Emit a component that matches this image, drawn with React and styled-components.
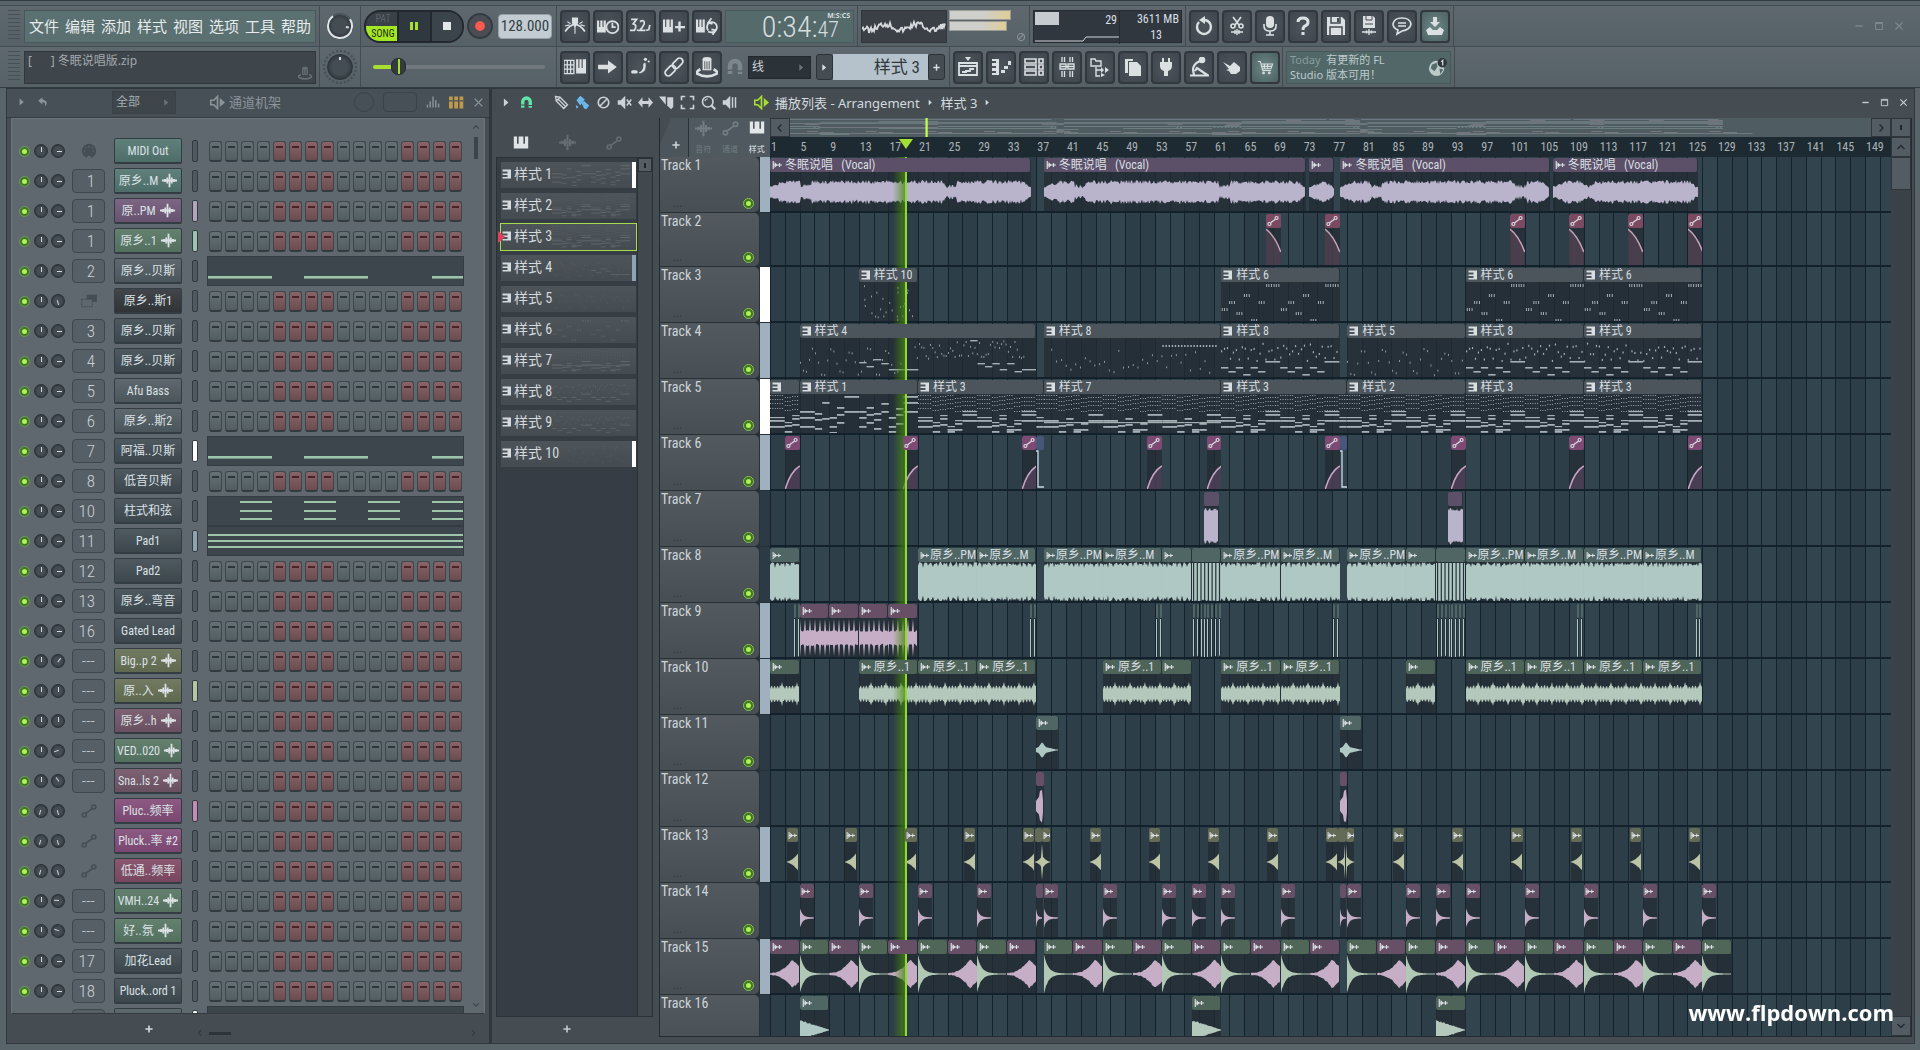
import React from "react";
import styled, { createGlobalStyle, css } from "styled-components";

const NARROW = '"Roboto Condensed", "Liberation Sans Narrow", "Roboto", "Noto Sans CJK SC", sans-serif';
const SANS = '"Noto Sans", "Noto Sans CJK SC", sans-serif';
const BARS = 151.5;

const GlobalStyle = createGlobalStyle`
  * { box-sizing: border-box; }
  body { margin: 0; background: #59636a; overflow: hidden; }
  button, input, select { font: inherit; color: inherit; margin: 0; padding: 0; border: 0; background: none; }
  svg { display: block; }
  h1, h2, ul { margin: 0; padding: 0; font-weight: 400; list-style: none; }
`;

/* ---------- icons ---------- */
const line = { fill: "none", stroke: "currentColor", strokeWidth: 1.6 };
const ICONS = {
  metronome: <g {...line}><path d="M1 15Q10 2 19 15" /><path d="M10 3v14M3 6l3 2M17 6l-3 2M1 10l4-1M19 10l-4-1" strokeWidth="1" /><path d="M8 3h4v4l-2 3-2-3z" fill="currentColor" /></g>,
  wait: <g><path d="M0 5h2v6h1V5h2v6h1V5h2v11H0z" fill="currentColor" /><circle cx="14" cy="11" r="5.5" {...line} /><path d="M14 7v4h3" {...line} /></g>,
  count: <g {...line}><path d="M1 4h5l-3 4q4 1 1 6H0M9 6q4-2 4 1 0 2-4 7h5M18 9l-1 5M7 13v1.500M15.500 13v1.500" /></g>,
  overdub: <g><path d="M0 4h2v7h1V4h3v7h1V4h2v12H0z" fill="currentColor" /><path d="M15 6v9M11 11h9" {...line} strokeWidth="2.2" /></g>,
  loop: <g><path d="M0 4h2v7h1V4h2v7h1V4h2v12H0z" fill="currentColor" /><path d="M18 8a5 5 0 0 0-7 0q-2 3 0 6M11 15q4 2 7-1 2-3 0-6M14 3l-3 4 4 1M15 18l3-4-4-1" {...line} /></g>,
  typing: <g><path d="M0 4h9v12H0zM0 8h9M0 12h9M3 4v12M6 4v12" {...line} strokeWidth="1.200" /><path d="M11 3h2v8h1V3h2v8h1V3h3v13h-9z" fill="currentColor" /></g>,
  arrow: <path d="M1 8h9V4l8 6-8 6v-4H1z" fill="currentColor" />,
  slide: <g fill="currentColor"><rect x="1" y="13" width="6" height="3" rx="1.500" /><path d="M8 15q5-2 4-8l2-1q2 8-5 10z" /><circle cx="14" cy="3" r="1.500" /><circle cx="17" cy="5" r="1" /></g>,
  link: <g {...line}><rect x="8" y="4" width="11" height="6" rx="3" transform="rotate(-45 13 7)" /><rect x="1" y="10" width="11" height="6" rx="3" transform="rotate(-45 7 13)" /></g>,
  knob: <g><path d="M6 3h8v10H6z" fill="currentColor" /><path d="M8 4v8M10 4v8M12 4v8" stroke="#444b52" strokeWidth=".800" /><ellipse cx="10" cy="3" rx="4" ry="2" fill="currentColor" /><path d="M4 12q-4 2-3 4 9 5 18 0 1-2-3-4" {...line} strokeWidth="2.400" /></g>,
  magnet: <path d="M5 17V9a5 5 0 0 1 10 0v8" fill="none" stroke="currentColor" strokeWidth="4.500" strokeDasharray="3 1.500 23 1.500 3" />,
  playlist: <g><path d="M7 0h6l-3 4z" fill="currentColor" /><path d="M1 6h18v12H1zM1 9h18M4 15h4v-1h4v-2h4" {...line} strokeWidth="1.800" /></g>,
  piano: <g fill="currentColor"><path d="M1 2h7v16H1v-2h4v-2H1v-3h4V9H1V6h4V4H1z" /><path d="M10 13h4v3h-4zM13 9h4v3h-4zM17 4h3v4h-3z" /></g>,
  rack: <g {...line}><path d="M1 2h11v4H1zM1 8h11v4H1zM1 14h11v4H1zM15 2h4v4h-4zM15 8h4v4h-4zM15 14h4v4h-4z" /></g>,
  mixer: <g {...line} strokeWidth="1.300"><path d="M5 0v5M7.500 0v5M5 14v6M7.500 14v6M13 0v5M15.500 0v5M13 14v6M15.500 14v6" /><path d="M3 7h6v5H3zM11 7h6v5h-6zM3 9.500h14" /></g>,
  browser: <g><path d="M1 2h4l1 2h5v5H1zM6 10v9h4M6 13h5" {...line} strokeWidth="1.400" /><path d="M11 10v6l3-3zM15 10v6l4-3zM11 16v4l4-2z" fill="currentColor" /></g>,
  files: <g fill="currentColor"><path d="M2 2h8v2H5v12H2z" /><path d="M6 5h8l4 4v10H6z" /></g>,
  plug: <path d="M6 1h2v4h4V1h2v4h2v4q0 4-4 5v5H8v-5q-4-1-4-5V5h2z" fill="currentColor" />,
  stomp: <g {...line}><circle cx="13" cy="3" r="2.500" fill="currentColor" /><path d="M11 4Q4 7 4 13l1 5M1 18.500h18L8 11l-2 3" strokeWidth="2.200" /></g>,
  hand: <path d="M1 5l7 4 4-4 6 5v4l-4 3H9l-2-3-3-1 3-1z" fill="currentColor" />,
  cart: <g {...line} strokeWidth="1.300" transform="translate(2 2) scale(.82)"><path d="M1 3h3l3 11h10M5 6h14l-2 6H6M9 6v6M13 6v6M5 9h13" /><circle cx="8" cy="17" r="1" /><circle cx="15" cy="17" r="1" /></g>,
  undo: <g><path d="M5 6a7 7 0 1 0 6-2" {...line} strokeWidth="2.400" /><path d="M11 0v8L5 4z" fill="currentColor" /></g>,
  cut: <g {...line}><path d="M6 1l6 8M14 1L8 9" /><circle cx="6" cy="10" r="2" /><circle cx="14" cy="10" r="2" /><path d="M4 16h12M8 14v4M10 13v6M12 14v4" strokeWidth="1.400" /></g>,
  mic: <g><rect x="6" y="0" width="8" height="12" rx="4" fill="currentColor" /><path d="M4 8v2q0 5 6 5t6-5V8M10 15v4M6 19h8" {...line} /></g>,
  help: <g><path d="M5 6q0-4 5-4t5 4q0 3-3 4-2 1-2 4" {...line} strokeWidth="3" /><rect x="8.500" y="16" width="3" height="3" fill="currentColor" /></g>,
  save: <g><path d="M1 1h15l3 3v15H1z" fill="currentColor" /><path d="M5 1v6h9V1M4 19v-8h12v8" fill="none" stroke="#444b52" strokeWidth="1.500" /><path d="M11 2h2v4h-2z" fill="#444b52" /></g>,
  render: <g><path d="M4 0h10l2 2v10H4z" fill="currentColor" /><path d="M7 0v4h6V0M6 8h8" stroke="#444b52" fill="none" /><path d="M3 16h14M7.500 14.500v3M10 13v6M12.500 14.500v3" {...line} strokeWidth="1.400" /></g>,
  chat: <g {...line}><path d="M5 18l1-4q-5-2-5-6 1-6 9-6t9 6q-1 6-9 7z" /><path d="M6 7h8M6 10h8" /></g>,
  download: <g fill="currentColor"><path d="M8 1h4v5h3l-5 5-5-5h3z" /><path d="M1 14l4-3 3 3h4l3-3 4 3-2 5H3z" /></g>,
  keys: <path d="M1 2h4v9h2V2h6v9h2V2h4v15H1z" fill="currentColor" />,
  wave: <path d="M0 10h20M4 8v4M7 6v8M10 1v18M13 6v8M16 8v4" stroke="currentColor" strokeWidth="2.400" />,
  auto: <g {...line} strokeWidth="2"><circle cx="4" cy="15" r="2.500" /><circle cx="16" cy="5" r="2.500" /><path d="M6 13L14 7" /></g>,
  pencil: <g {...line} strokeWidth="1.800"><path d="M2 2l6 1 10 10-5 5L3 8zM5 5l10 10M8 3l-5 5" /></g>,
  brush: <g fill="currentColor"><path d="M2 7l5-6 6 5-6 8z" /><path d="M9 11l3-3 7 6-4 5-3-1z" /><path d="M1 13l4 3-3 2z" /></g>,
  slash: <g {...line} strokeWidth="2.200"><circle cx="10" cy="10" r="7" /><path d="M5 15L15 5" /></g>,
  mute: <g><path d="M1 7h4l6-6v18l-6-6H1z" fill="currentColor" /><path d="M13 6l6 8M19 6l-6 8" {...line} strokeWidth="2" /></g>,
  slip: <path d="M0 10l6-7v5h8V3l6 7-6 7v-5H6v5z" fill="currentColor" />,
  slice: <g fill="currentColor"><path d="M0 2h9v11z" /><path d="M11 3h8v13l-3 3-5-5z" /></g>,
  select: <path d="M2 7V2h5M13 2h5v5M18 13v5h-5M7 18H2v-5" {...line} strokeWidth="2.200" />,
  zoom: <g><circle cx="9" cy="9" r="7" {...line} strokeWidth="2.200" /><path d="M14 14l5 5" {...line} strokeWidth="3" /><path d="M5 8q1-3 4-3" {...line} /></g>,
  speaker: <g><path d="M1 7h4l6-6v18l-6-6H1z" fill="currentColor" /><path d="M14 3v14M18 3v14" {...line} strokeWidth="2" /></g>,
  play: <g><path d="M1 7h4l5-5v16l-5-5H1z" {...line} strokeWidth="2.200" /><path d="M13 4l7 6-7 6z" fill="currentColor" /></g>,
  tri: <path d="M6 4l7 6-7 6z" fill="currentColor" />,
  back: <path d="M9 2L2 8l7 6v-4q6 0 4 8 8-9-4-12z" fill="currentColor" />,
  bars: <path d="M2 14v4M6 9v9M10 2v16M14 7v11M18 12v6" stroke="currentColor" strokeWidth="2" />,
  racks: <g fill="currentColor"><path d="M0 2h5v16H0zM7 2h5v16H7zM14 2h5v16h-5z" /><path d="M0 7h5v1.500H0zM7 7h5v1.500H7zM14 7h5v1.500h-5z" fill="#475057" /></g>,
  close: <path d="M3 3l14 14M17 3L3 17" {...line} strokeWidth="2.400" />,
  plus: <path d="M10 1v18M1 10h18" {...line} strokeWidth="4" />,
  up: <path d="M3 14l7-7 7 7" {...line} strokeWidth="2.600" />,
  down: <path d="M3 6l7 7 7-7" {...line} strokeWidth="2.600" />,
  left: <path d="M13 3l-7 7 7 7" {...line} strokeWidth="2.600" />,
  right: <path d="M7 3l7 7-7 7" {...line} strokeWidth="2.600" />,
  min: <path d="M3 10h14" {...line} strokeWidth="3" />,
  max: <path d="M3 3h14v14H3zM3 5h14" {...line} strokeWidth="2" />,
  pat: <path d="M1 1h17v18H1v-3h10v-4H1V9h10V5H1z" fill="currentColor" />,
  clip: <g><path d="M2.500 2v16M2 10h18M15 6v8" stroke="currentColor" strokeWidth="2.400" /><path d="M5 4v12l6-6z" fill="currentColor" /></g>,
  midi: <g><circle cx="10" cy="10" r="9" fill="currentColor" /><path d="M8 19v-3h4v3" fill="#5e686e" /><g fill="#5e686e"><circle cx="4.500" cy="10" r="1" /><circle cx="6" cy="6" r="1" /><circle cx="10" cy="4.500" r="1" /><circle cx="14" cy="6" r="1" /><circle cx="15.500" cy="10" r="1" /></g></g>,
  layer: <g><path d="M7 2h13v9H7z" fill="currentColor" /><path d="M1 8h13v9H1z" fill="#5e686e" stroke="currentColor" strokeWidth="1.500" strokeDasharray="2 1" /></g>,
  globe: <g><circle cx="9" cy="11" r="8" fill="currentColor" /><path d="M4 7l5-2 1 4-3 5-4-3zM12 11l4 1-3 5z" fill="#556b6b" /><circle cx="15" cy="5" r="5" fill="#30383e" /><path d="M14 4l1.500-1.500V8" stroke="#d8e0e0" strokeWidth="1.300" fill="none" /></g>,
};
const Icon = ({ name, size = 20 }) => (
  <svg width={size} height={size} viewBox="0 0 20 20" aria-hidden="true">{ICONS[name]}</svg>
);

/* ---------- toolbar ---------- */
const Shell = styled.div`
  height: 100vh; display: flex; flex-direction: column; overflow: hidden;
  background: #59636a; color: #d9dfe3; font: 12px/16px ${NARROW};
  border-top: 1px solid #343d43; padding-top: 4px;
`;
const Bar = styled.div`
  display: flex; height: 41px; flex: none; padding-left: 5px;
  border-top: 1px solid #424b51;
  background: linear-gradient(#5e686e, #566067);
`;
const Cell = styled.div`
  display: flex; align-items: center; height: 40px; gap: ${(p) => p.$gap ?? 3}px;
  width: ${(p) => (p.$w ? p.$w + "px" : "auto")}; padding: 0 3px; flex: none;
  border-right: 1px solid #434c52;
  justify-content: ${(p) => p.$justify || "flex-start"};
`;
const Grip = styled.div`
  width: 12px; height: 32px; margin-right: 1px;
  background: repeating-linear-gradient(#465057 0 1px, transparent 1px 4px);
`;
const MenuBar = styled.nav`
  flex: 1; height: 33px; display: flex; align-items: center; justify-content: space-between; padding: 0 4px;
  background: #5b7070; border: 1px solid #48575a;
`;
const MenuItem = styled.button`font: 15px/22px ${SANS}; color: #e6ecee; white-space: nowrap;`;
const Hint = styled.div`
  flex: 1; height: 33px; display: flex; justify-content: space-between; padding: 0 3px;
  background: #3e454b; border: 1px solid #30373d; font: 12px/18px ${SANS}; color: #a3a9ad;
`;
const HintIcon = styled.span`align-self: flex-end; color: #666f75; padding-bottom: 3px;`;
const Knob = styled.input.attrs({ type: "range" })`
  appearance: none; flex: none; width: ${(p) => p.$s}px; height: ${(p) => p.$s}px; border-radius: 50%;
  transform: rotate(${(p) => p.$a || 0}deg);
  background:
    linear-gradient(#d3d9dc, #d3d9dc) center 2px / ${(p) => (p.$s > 20 ? 2 : 1)}px ${(p) => (p.$s > 20 ? 3 : 5)}px no-repeat,
    radial-gradient(circle, #454d54 0 45%, #30373d 75%);
  border: ${(p) => (p.$ring ? "2px solid #dfe4e7" : "1px solid #2c3338")};
  ${(p) => p.$ring && css`border-left-color: #4a5359;`}
  outline: ${(p) => (p.$s > 20 && !p.$ring ? "2px dotted #454e54" : "none")};
  outline-offset: 2px;
  &::-webkit-slider-thumb { appearance: none; width: 0; height: 0; }
`;
const Transport = styled.div`
  display: flex; width: 100px; height: 33px; border-radius: 16px; overflow: hidden; flex: none;
  border: 2px solid #22282e; background: #3a4148;
`;
const Mode = styled.button`
  width: 31px; display: flex; flex-direction: column; font: 10px/14px ${NARROW}; color: #5a6268; text-align: center;
`;
const ModeOn = styled.span`background: #a4e824; color: #1f2b10; display: block; line-height: 16px; padding-left: 3px;`;
const ModeOff = styled.span`display: block; padding-left: 3px; line-height: 14px;`;
const TButton = styled.button`
  flex: 1; display: grid; place-items: center; border-left: 2px solid #22282e;
  background: ${(p) => (p.$down ? "#2f373f" : "#3b434b")};
`;
const Record = styled.button`
  width: 26px; height: 26px; border-radius: 50%; border: 2px solid #343b41; display: grid; place-items: center;
  background: radial-gradient(circle, #fa5a50 0 28%, #4a4d53 34%);
  flex: none;
`;
const Tempo = styled.input`
  width: 54px; height: 25px; border-radius: 4px; background: #c2ccd2; color: #333c42; text-align: center;
  font: 15px/24px ${NARROW}; border: 1px solid #95a1a8; flex: none; margin-left: 2px;
`;
const Slider = styled.input.attrs({ type: "range" })`
  appearance: none; width: 172px; height: 20px;
  &::-webkit-slider-runnable-track {
    height: 4px; border-radius: 2px; background: linear-gradient(90deg, #a8df2e 12%, #71797f 12%);
  }
  &::-webkit-slider-thumb {
    appearance: none; width: 15px; height: 17px; margin-top: -7px; border-radius: 7px;
    background: linear-gradient(90deg, transparent 6px, #a8df2e 6px 8px, transparent 8px), #333a40; border: 1px solid #232a2f;
  }
`;
const Tool = styled.button`
  width: 30px; height: 33px; flex: none; display: grid; place-items: center; border-radius: 4px;
  border: 2px solid #31383e; color: #dbe0e3;
  background: ${(p) => (p.$teal ? "radial-gradient(#6d8786, #4c6163)" : "radial-gradient(#4d555c, #3f464d)")};
`;
const Clock = styled.div`
  width: 130px; height: 33px; background: #556a6a; border: 1px solid #495a5c; position: relative;
  display: flex; align-items: baseline; justify-content: flex-end; padding-right: 14px; color: #d5dee0;
  font: 30px/32px ${NARROW}; font-weight: 300;
`;
const ClockSmall = styled.span`font-size: 22px;`;
const ClockUnit = styled.span`position: absolute; right: 3px; top: 1px; font: bold 7px/8px ${SANS}; color: #d5dee0;`;
const Scope = styled.div`width: 86px; height: 33px; background: #3a4046; border: 1px solid #30363c;`;
const Meters = styled.div`width: 77px; height: 33px; display: flex; flex-direction: column; gap: 1px;`;
const Meter = styled.div`
  height: 10px; width: ${(p) => p.$w}px; background: linear-gradient(90deg, #cfd0cc 55%, #e0cd96); border: 1px solid #9b9c95;
`;
const MeterEye = styled.span`align-self: flex-end; color: #899196;`;
const Cpu = styled.div`
  width: 150px; height: 33px; display: grid; grid-template-columns: 86px 1fr; background: #30373e; border: 1px solid #262c32;
  font: 12px/16px ${NARROW};
`;
const CpuLeft = styled.div`display: grid; grid-template-columns: 24px 1fr; padding: 1px; border-right: 1px solid #252b30;`;
const CpuBlock = styled.i`height: 13px; background: #c5cbcf;`;
const CpuText = styled.span`text-align: right; padding-right: ${(p) => p.$pr || 2}px; display: block;`;
const CpuGraph = styled.svg`grid-column: 1 / 3;`;
const Dropdown = styled.select`
  appearance: none; width: ${(p) => p.$w}px; height: 23px; padding: 0 3px; border: 1px solid ${(p) => p.$line || "#23292e"};
  background: ${(p) => p.$bg || "#2c3338"}; color: ${(p) => p.$c || "#cfd5d9"}; font: 12px/20px ${SANS};
`;
const DropWrap = styled.div`display: flex; align-items: center; color: #6d757b; margin-left: ${(p) => p.$ml || 0}px;`;
const DropArrow = styled.span`margin-left: -15px; pointer-events: none;`;
const PatternBox = styled.div`display: flex; margin-left: 6px;`;
const MiniButton = styled.button`
  width: 17px; height: 26px; border: 1px solid #2c3338; border-radius: 3px; background: #454d53; display: grid; place-items: center;
`;
const PatternName = styled.input`
  width: 95px; height: 26px; background: #b5c2cb; color: #30383e; text-align: right; padding-right: 8px; font: 17px/26px ${NARROW};
`;
const News = styled.div`
  width: 165px; height: 33px; display: flex; justify-content: space-between; align-items: center; padding: 0 3px; background: #516768;
  border: 1px solid #465759; font: 11px/15px ${SANS}; color: #bccaca;
`;
const Dim = styled.span`color: #879c9c;`;
const WindowButtons = styled.div`
  display: flex; gap: 10px; margin-left: auto; align-items: center; padding-right: ${(p) => p.$pr ?? 16}px; color: ${(p) => p.$c || "#7c868c"};
`;
const Plain = styled.button`display: grid; place-items: center; color: ${(p) => p.$c || "inherit"}; margin-left: ${(p) => p.$ml || 0}px;`;

/* ---------- channel rack ---------- */
const Main = styled.main`flex: 1; min-height: 0; display: flex; padding: 0 5px 6px 6px; border-top: 1px solid #343c42;`;
const Panel = styled.section`
  display: flex; flex-direction: column; background: #454d53; border: 1px solid #30383e; min-height: 0; min-width: 0;
`;
const Rack = styled(Panel)`width: 484px; flex: none;`;
const RackHead = styled.header`
  height: 29px; flex: none; display: flex; align-items: center; color: #8c9499; padding: 0 5px 2px 9px; gap: 9px;
  background: #475057; border-bottom: 1px solid #343c42;
`;
const RackTitle = styled.h2`display: flex; align-items: center; gap: 4px; font: 13px/18px ${SANS}; margin-left: 29px; flex: 1;`;
const Faint = styled.span`
  width: ${(p) => p.$w}px; height: 20px; border: 1px solid #3b4349; border-radius: ${(p) => p.$r}px;
`;
const RackBody = styled.div`
  flex: 1; min-height: 0; margin: 0 4px; display: flex; background: #5e686e; border: 1px solid #6b757b; border-bottom-color: #343c42; overflow: hidden;
`;
const Channels = styled.ul`flex: none; width: 457px; padding: 17px 0 0 7px;`;
const Channel = styled.li`
  height: 30px; display: grid; align-items: center;
  grid-template-columns: 15px 17px 21px 42px 78px 15px 257px;
`;
const Led = styled.input.attrs({ type: "checkbox", defaultChecked: true })`
  appearance: none; width: 9px; height: 9px; border-radius: 50%; border: 2px solid #3c7a20; flex: none;
  background: #b4f05a; outline: 1px solid ${(p) => (p.$track ? "#8ec44a" : "#6e9a58")}; margin-left: 1px;
`;
const Route = styled.button`
  width: 33px; height: 24px; border: 1px solid #3e474d; border-radius: 4px; color: #c9cfd3; text-align: right;
  font: 300 17px/22px ${NARROW}; padding-right: 9px; background: #565f66;
`;
const RouteIcon = styled.span`width: 33px; display: grid; place-items: center; color: #454e54;`;
const tones = {
  teal: ["#60807c", "#4d6d69"], purple: ["#7c6683", "#665270"], green: ["#64806f", "#53705f"], gray: ["#5e686f", "#4b555c"],
  black: ["#42464a", "#303437"], dark: ["#4e5960", "#3c464d"], olive: ["#727b62", "#5f694f"], rose: ["#7d6274", "#695061"],
  magenta: ["#8d5a84", "#784670"], red: ["#8a5670", "#79465f"],
};
const ChannelName = styled.button`
  width: 68px; height: 26px; display: flex; align-items: center; justify-content: center; gap: 4px; border-radius: 2px;
  border: 1px solid #333c42; border-bottom-width: 2px; color: #dbe1e4; white-space: nowrap; font: 12px/20px ${NARROW};
  background: linear-gradient(${(p) => tones[p.$t][0]}, ${(p) => tones[p.$t][1]});
`;
const Selector = styled.button`width: 6px; height: 22px; border: 1px solid #333b41; border-radius: 2px; background: ${(p) => p.$c || "#4f595f"};`;
const Steps = styled.div`display: flex; gap: 3px; padding-left: 2px;`;
const Step = styled.input.attrs({ type: "checkbox" })`
  appearance: none; width: 13px; height: 21px; border-radius: 3px; border: 1px solid #3e464b; border-bottom: 2px solid #343b40;
  background:
    linear-gradient(${(p) => (p.$red ? "#4a2328" : "#2d3539")}, ${(p) => (p.$red ? "#4a2328" : "#2d3539")}) center 4px / 7px 2px no-repeat,
    linear-gradient(${(p) => (p.$red ? "#8a6466, #6c4c4f" : "#667176, #515d61")});
`;
const Roll = styled.div`height: 30px; background: #3e464d; border: 1px solid #343b41;`;
const ScrollColumn = styled.div`flex: 1; display: flex; flex-direction: column; align-items: center; padding: 4px 1px 4px 0; color: #3b444a; justify-content: space-between;`;
const Thumb = styled.i`width: 4px; height: 22px; background: #3b444a; margin: 6px auto 0; display: block;`;
const RackFoot = styled.footer`height: 29px; flex: none; display: flex; align-items: center; color: #30383d;`;
const HScroll = styled.div`display: flex; align-items: center; gap: 5px; flex: 1; padding: 9px 12px 0 43px;`;
const HThumb = styled.i`width: 22px; height: 3px; background: #2c343a; margin-right: auto;`;

const CHANNELS = [
  ["midi", "MIDI Out", "teal"], ["1", "原乡..M", "teal", 1], ["1", "原..PM", "purple", 1, "#b4a4c0"], ["1", "原乡..1", "green", 1, "#9cc4ae"],
  ["2", "原乡..贝斯", "gray", 0, 0, "bass"], ["layer", "原乡..斯1", "black", 0, 0, 0, 165], ["3", "原乡..贝斯", "dark"], ["4", "原乡..贝斯", "dark"],
  ["5", "Afu Bass", "gray"], ["6", "原乡..斯2", "gray"], ["7", "阿福..贝斯", "dark", 0, "#ffffff", "bass"], ["8", "低音贝斯", "dark"],
  ["10", "柱式和弦", "dark", 0, 0, "chord"], ["11", "Pad1", "dark", 0, "#8fa3b3", "pad"], ["12", "Pad2", "dark"], ["13", "原乡..弯音", "dark"],
  ["16", "Gated Lead", "dark"], ["---", "Big..p 2", "olive", 1, 0, 0, 35], ["---", "原..入", "olive", 1, "#b4c6a4", 0, 0],
  ["---", "原乡..h", "rose", 1, 0, 0, 0], ["---", "VED..020", "green", 1, 0, 0, 250], ["---", "Sna..ls 2", "rose", 1, 0, 0, 325],
  ["auto", "Pluc..频率", "magenta", 0, "#c48ab8", 0, 165], ["auto", "Pluck..率 #2", "magenta", 0, 0, 0, 165], ["auto", "低通..频率", "red", 0, 0, 0, 165],
  ["---", "VMH..24", "green", 1, 0, 0, 275], ["---", "好..氛", "green", 1, 0, 0, 290], ["17", "加花Lead", "dark"], ["18", "Pluck..ord 1", "dark"],
  ["", "", "gray", 0, "#ffffff", "empty"],
];
const ROLLS = {
  bass: [[0, 19, 64], [96, 19, 64], [224, 19, 31]],
  chord: [32, 96, 160, 224].flatMap((x) => [[x, 4, 32], [x, 13, 32], [x, 21, 32]]),
  pad: [[0, 7, 255], [0, 13, 255], [0, 19, 255]],
  empty: [],
};

function ChannelRow({ data, index }) {
  const [route, name, tone, wave, sel, roll, angle = 90] = data;
  const icon = ICONS[route];
  return (
    <Channel>
      <Led aria-label={`Channel ${index + 1} on`} />
      <Knob $s={14} $a={route === "auto" ? 195 : 0} aria-label={`Channel ${index + 1} pan`} />
      <Knob $s={14} $a={angle} aria-label={`Channel ${index + 1} volume`} />
      {icon ? <RouteIcon><Icon name={route} size={16} /></RouteIcon> : <Route>{route}</Route>}
      <ChannelName $t={tone}>{name}{wave ? <Icon name="wave" size={15} /> : null}</ChannelName>
      <Selector $c={sel} aria-label={`Select channel ${index + 1}`} />
      {roll ? (
        <Roll>
          <svg width="100%" height="28" viewBox="0 0 255 28" preserveAspectRatio="none">
            {ROLLS[roll].map(([x, y, w], i) => <rect key={i} x={x} y={y} width={w} height={roll === "bass" ? 2.6 : 2} fill="#9cc4a8" />)}
          </svg>
        </Roll>
      ) : (
        <Steps>
          {Array.from({ length: 16 }, (_, i) => (
            <Step key={i} $red={Math.floor(i / 4) % 2 === 1} aria-label={`Channel ${index + 1} step ${i + 1}`} />
          ))}
        </Steps>
      )}
    </Channel>
  );
}

/* ---------- playlist data ---------- */
const rnd = (seed) => { let s = seed * 9301 + 49297; return () => { s = (s * 9301 + 49297) % 233280; return s / 233280; }; };
const TONE = {
  vocal: ["#5b5068", "#b9b3cb"], mint: ["#4f6664", "#b0c8c4"], rose: ["#674f66", "#c6aec6"], leaf: ["#506758", "#b0c8b4"],
  sage: ["#4f6459", "#b4c8bc"], olive: ["#636a55", "#bcc4a6"], pat: ["#4b555b", "#a4b0b5"], steel: ["#46577a", "#aeb8d8"],
  pink: ["#7b4a62", "#c8a4b8"], plum: ["#7d4a74", "#c8a4c4"],
};
const V = (b, e, label) => ({ b, e, label, tone: "vocal", kind: "vocal" });
const P = (b, e, n) => ({ b, e, n, label: n ? `样式 ${n}` : "", tone: "pat", kind: "midi" });
const A = (b, tone, kind) => ({ b, e: b + 2, tone, kind });
const W = (b, e, tone, kind, label) => ({ b, e, tone, kind, label });
const PM = "原乡..PM", M = "原乡..M", ONE = "原乡..1", VOC = "冬眠说唱\u00a0\u00a0 (Vocal)";
const thin = (a) => a.map((b) => W(b, b + 0.25, "mint", "block"));
const cluster = (s) => [0.2, 0.7, 1.2, 1.7, 2.1, 2.6, 3.1, 3.7].map((d) => s + d);
const swing = [];
[[0, 36, 0], [37, 77, 1], [78, 130, 1]].forEach(([s, e, g]) => {
  for (let b = s, i = g; b < e; b += 4, i++) swing.push(W(b, b + 4, i % 2 ? "leaf" : "rose", i % 2 ? "impact" : "grow", ""));
});
const BLUE = "#9fb1be";
const TRACKS = [
  [BLUE, [V(0, 35.3, VOC), V(37, 72.4, VOC), V(72.8, 76.2, ""), V(77.1, 105.4, VOC), V(105.8, 125.4, VOC)]],
  [null, [67, 75, 100, 108, 116, 124].map((b) => A(b, "pink", "fall"))],
  ["#ffffff", [P(12, 20, 10), P(61, 77, 6), P(94, 110, 6), P(110, 126, 6)]],
  [BLUE, [P(4, 36, 4), P(37, 61, 8), P(61, 77, 8), P(78, 94, 5), P(94, 110, 8), P(110, 126, 9)]],
  ["#ffffff", [P(0, 4, 0), P(4, 20, 1), P(20, 37, 3), P(37, 61, 7), P(61, 78, 3), P(78, 94, 2), P(94, 110, 3), P(110, 126, 3)]],
  [BLUE, [...[2, 18, 34, 51, 59, 75, 92, 108, 124].map((b) => A(b, "plum", "rise")), ...[36, 77].map((b) => W(b, b + 1, "steel", "bracket"))]],
  [null, [W(58.7, 60.7, "vocal", "tall"), W(91.6, 93.7, "vocal", "tall")]],
  [null, [W(0, 4, "mint", "full", ""), W(20, 28, "mint", "full", PM), W(28, 36, "mint", "full", M), W(37, 45, "mint", "full", PM), W(45, 53, "mint", "full", M),
    W(53, 57, "mint", "full", ""), W(57, 61, "mint", "sliced"), W(61, 69, "mint", "full", PM), W(69, 77, "mint", "full", M), W(78, 86, "mint", "full", PM),
    W(86, 90, "mint", "full", ""), W(90, 94, "mint", "sliced"), W(94, 102, "mint", "full", PM), W(102, 110, "mint", "full", M), W(110, 118, "mint", "full", PM), W(118, 126, "mint", "full", M)]],
  [BLUE, [...[4, 8, 12, 16].map((b) => W(b, b + 4, "rose", "kick", "")),
    ...thin([3.2, 3.8, 35.2, 35.7, 52.2, 52.7, ...cluster(57), 76.1, 76.6, ...cluster(90), 109.1, 109.6, 125.1, 125.6])]],
  [BLUE, [W(0, 4, "sage", "hat", ""), ...[12, 20, 28, 45].map((b) => W(b, b + 8, "sage", "hat", ONE)), W(53, 57, "sage", "hat", ""),
    W(61, 69, "sage", "hat", ONE), W(69, 77, "sage", "hat", ONE), W(86, 90, "sage", "hat", ""), ...[94, 102, 110, 118].map((b) => W(b, b + 8, "sage", "hat", ONE))]],
  [null, [W(36, 39, "mint", "bump", ""), W(77, 80, "mint", "bump", "")]],
  [null, [W(36, 37, "rose", "burst"), W(77, 78, "rose", "burst")]],
  [BLUE, [...[2.3, 10.2, 18.3, 26.2, 34.2, 43.2, 51.2, 59.2, 67.2, 75.2, 84.2, 92.2, 100.2, 108.2, 116.2, 124.2].map((b) => W(b, b + 1.5, "olive", "swell", "")),
    ...[35.8, 76.8].flatMap((b) => [W(b, b + 1, "olive", "starIn"), W(b + 1, b + 2.1, "olive", "starOut", "")])]],
  [null, [4, 12, 20, 28, 37, 45, 53, 57, 61, 69, 78, 86, 90, 94, 102, 110, 118, 126].map((b) => W(b, b + 1.9, "rose", "hit", ""))
    .concat([W(36, 36.9, "rose", "hit"), W(77, 77.9, "rose", "hit")])],
  [BLUE, swing],
  [null, [W(4, 8, "mint", "decay", ""), W(57, 61, "sage", "decay", ""), W(90, 94, "sage", "decay", "")]],
];

const ENV = {
  vocal: (t, x, r, w) => Math.min(1, 0.5 + x / 30, 0.4 + (w - x) / 14) * (8 + r() * 4 - (Math.sin(x / 23) > 0.97 ? 4 : 0)),
  full: (t, x, r) => (Math.round(x) % 5 === 0 ? 14 + r() * 3 : 17 + r() * 3),
  kick: (t, x, r) => (Math.round(x) % 5 === 0 ? 19 : 6 + r() * 2),
  hat: (t, x, r) => (Math.round(x) % 15 === 12 ? 12 : Math.round(x) % 3 === 0 ? 5 : 7 + r() * 2),
  block: () => 19, sliced: () => 19,
  tall: (t, x, r) => 15 + r() * 3,
  bump: (t) => 0.5 + 4 * Math.exp(-Math.pow((t - 0.27) * 9, 2)) + 3 * Math.max(0, 1 - Math.abs(t - 0.3) * 1.6),
  burst: (t, x, r) => (t < 0.5 ? 5 + t * 10 : t < 0.9 ? 18 - r() * 4 : 6),
  swell: (t) => 0.5 + 8 * Math.pow(t, 1.7),
  starIn: (t) => (t > 0.88 ? 18 : 0.5 + 6 * t * t),
  starOut: (t) => (t < 0.1 ? 18 : 0.5 + 6 * Math.pow(1 - t, 2)),
  hit: (t) => 0.6 + 9 * Math.exp(-t * 5.5),
  grow: (t, x, r) => 0.5 + (t < 0.75 ? 13.5 * Math.pow(t / 0.75, 2.3) : 13.5 - (t - 0.75) * 30) + r(),
  impact: (t) => 0.5 + 19 * Math.exp(-t * 7),
  decay: (t, x, r) => 0.6 + (8 + r() * 2) * Math.max(0, 1 - t * 1.05),
};
function Wave({ kind, w, color, seed }) {
  const r = rnd(seed);
  const top = [], bot = [];
  const f = ENV[kind];
  for (let x = 0; x <= w; x += 1) {
    const a = f(x / w, x, r, w);
    top.push(`${x.toFixed(0)} ${(20 - a).toFixed(1)}`);
    bot.unshift(`${x.toFixed(0)} ${(20 + a * (0.92 + r() * 0.12)).toFixed(1)}`);
  }
  return (
    <>
      <path d={`M${top.join("L")}L${bot.join("L")}Z`} fill={color} />
      {kind === "sliced" && Array.from({ length: 8 }, (_, i) => <rect key={i} x={1 + i * 3.7} y="0" width="1.2" height="40" fill="#25323a" />)}
    </>
  );
}
const CHORDS = [[0, 2, [17, 23, 32]], [2, 1, [19, 25, 34]], [3, 1, [8, 24]], [4, 1, [23, 32, 38]], [5, 1, [13, 20, 28]], [6, 2, [2, 17]], [8, 1, [17, 23, 32]],
  [9, 1, [13, 20, 28]], [10, 1, [19, 25, 34]], [11, 1, [9, 17]], [12, 1, [23, 32, 37]], [13, 1, [14, 20, 29]], [14, 2, [2, 8, 17]]];
function notes(n, len) {
  const out = [];
  const r = rnd(n * 7 + 3);
  const u = 7.4;
  const put = (b, l, y, h = 1.4) => { if (b < len) out.push([b * u, y, Math.min(l, len - b) * u, h]); };
  if (n === 1) CHORDS.forEach(([b, l, ys]) => ys.forEach((y) => put(b, l, y, 1.8)));
  else if ([0, 2, 3, 7].includes(n)) {
    for (let k = 0; k < len; k += 8) {
      [[0, 2, 26], [2, 1, 31], [3, 1, 24], [4, 1, 35], [5, 1, 29], [6, 2, 20]].forEach(([b, l, y]) => {
        put(k + b, l, y, 1.8); put(k + b, l, Math.min(y + 6, 37), 1.8); put(k + b, l, n === 7 ? 28 : y - 3, 1.2);
        for (let x = 0; x < l * u - 1; x += 2.4)
          [2, 6, 10, 15].forEach((d) => { if ((k + b) * u + x < len * u) out.push([(k + b) * u + x, d + ((b * 3) % 4) - 1, 0.9, 1]); });
      });
    }
  } else if (n === 6) {
    for (let k = 0; k < len; k += 8)
      [26, 19, 30, 12, 37, 19, 2, 2].forEach((y, i) => [0.1, 0.4, 0.75].forEach((d) => out.push([(k + i + d) * u, y, 1, 3])));
  } else if (n === 10) {
    for (let i = 0; i < 26; i++) out.push([r() * len * u * 0.95, 3 + r() * 34, 0.8, 2]);
  } else if (n === 5 || n === 4) {
    const L = n === 4 ? 14 : 16;
    for (let i = 0; i < 34; i++) out.push([(i / 34) * L * u, 20 + Math.sin(i * 1.05) * 12 + r() * 6, 0.8, 2]);
    if (n === 4) {
      [[8, 1, 24], [9, 1, 28], [10, 1, 21], [11, 1, 25], [12, 4, 31], [24, 1, 25], [25, 1, 28], [26, 1, 25], [27, 1, 31], [28, 1, 25], [29, 1, 33], [30, 2, 31], [23, 1, 2]].forEach((a) => put(...a));
      for (let i = 0; i < 50; i++) out.push([(15.5 + (i / 50) * 15) * u, 2 + r() * 18, 0.8, 2]);
    }
  } else if (len > 20) {
    for (let i = 0; i < 34; i++) out.push([(1 + (i / 34) * 22) * u, 10 + r() * 26, 0.8, 2]);
    for (let i = 0; i < 18; i++) out.push([(16 + i * 0.42) * u, 7, 1.4, 2]);
  } else {
    for (let k = 0; k < len; k += 8) {
      [[0, 1, 29], [1, 1, 33], [2, 1, 29], [3, 1, 36], [4, 1, 29], [5, 1, 33], [6, 2, 23]].forEach(([b, l, y]) => put(k + b, l, y, 1.6));
      for (let i = 0; i < 20; i++) out.push([(k + (i / 20) * 8) * u, i % 3 ? 4 + r() * 12 : 12 + r() * 12, 1.2, 2]);
    }
  }
  return out;
}
function ClipArt({ clip, seed }) {
  const w = (clip.e - clip.b) * 7.4;
  const color = TONE[clip.tone][1];
  let art;
  if (clip.kind === "midi")
    art = notes(clip.n, clip.e - clip.b).map(([x, y, ww, h], i) => <rect key={i} x={x} y={y} width={ww} height={h} fill={color} />);
  else if (clip.kind === "fall")
    art = <><path d={`M0 1Q9 8 ${w} 24V40H0Z`} fill="#8a5a70" opacity=".35" /><path d={`M0 1Q9 8 ${w} 24`} fill="none" stroke={color} strokeWidth="1.5" /></>;
  else if (clip.kind === "rise")
    art = <><path d={`M0 40Q5 22 ${w} 16V40Z`} fill="#8a5a84" opacity=".35" /><path d={`M0 40Q5 22 ${w} 16`} fill="none" stroke={color} strokeWidth="1.5" /></>;
  else if (clip.kind === "bracket") art = <path d="M0 1h2v36h6" fill="none" stroke="#d0d8e8" strokeWidth="1.3" />;
  else art = <Wave kind={clip.kind} w={w} color={color} seed={seed} />;
  return <ClipBody width="100%" height="40" viewBox={`0 0 ${w} 40`} preserveAspectRatio="none" $clear={clip.kind === "bracket"}>{art}</ClipBody>;
}

/* ---------- playlist styles ---------- */
const Playlist = styled(Panel)`flex: 1; border-left-width: 2px; padding-right: 2px;`;
const PlHead = styled.header`height: 29px; flex: none; display: flex; align-items: center; padding: 0 4px 2px 8px; color: #ccd2d6;`;
const HeadTools = styled.div`display: flex; gap: 6px; margin-left: 20px; align-items: center;`;
const HeadTitle = styled.h1`display: flex; align-items: center; gap: 6px; margin-left: 17px; font: 13px/18px ${SANS}; color: #d4dade; white-space: nowrap;`;
const PlMain = styled.div`flex: 1; min-height: 0; display: flex;`;
const Picker = styled.aside`width: 157px; margin-left: 4px; flex: none; display: flex; flex-direction: column;`;
const PickTabs = styled.div`height: 39px; flex: none; display: flex; gap: 30px; padding: 10px 0 0 17px; align-items: center; color: #656d73;`;
const PickList = styled.div`flex: 1; min-height: 0; display: flex; border: 1px solid #2a3238; background: #3c434a;`;
const PickItems = styled.ul`flex: 1; padding: 4px 1px 0 4px; display: flex; flex-direction: column; gap: 5px; background: #363d44;`;
const PickItem = styled.li`
  height: 26px; display: flex; align-items: center; position: relative; background: linear-gradient(#4d545a, #444b51);
  ${(p) => p.$on && css`outline: 1px solid #a8dc4a;`}
`;
const PickButton = styled.button`
  display: flex; align-items: center; gap: 2px; width: 100%; height: 26px; padding: 0 0 2px 1px; font: 14px/22px ${NARROW}; color: #d4dade;
  border-right: 4px solid ${(p) => p.$edge || "transparent"};
`;
const PickNotes = styled.svg`position: absolute; right: 6px; top: 2px; opacity: 0.2; pointer-events: none;`;
const Marker = styled.i`position: absolute; left: -3px; top: 7px; border: 6px solid transparent; border-left: 7px solid #e0405c; border-right: 0;`;
const PickScroll = styled.div`width: 15px; border-left: 1px solid #2a3238; background: #41484e;`;
const PickScrollBtn = styled.button`width: 14px; height: 14px; display: grid; place-items: center; background: #565e65; border: 1px solid #2a3238; color: #23292e;`;
const Nub = styled.i`width: 2px; height: 5px; background: #1f262b;`;
const PickFoot = styled.div`height: 26px; flex: none; display: grid; place-items: center; color: #c5cbcf; padding: 0 16px 3px 0;`;
const Arrange = styled.div`flex: 1; min-width: 0; margin: 0 0 6px 6px; display: flex; flex-direction: column; border: 1px solid #232b31; border-top: 0;`;
const TopRow = styled.div`display: flex; height: 39px; flex: none;`;
const Corner = styled.button`
  width: 29px; display: grid; place-items: center; color: #d0d6da; padding: 15px 0 0 3px; background: #4c555b;
  border-right: 1px solid #2a3238; clip-path: polygon(11px 0, 100% 0, 100% 100%, 0 100%, 0 26px);
`;
const ViewTabs = styled.div`width: 81px; display: flex; background: #4f595f; padding: 2px 0 0 1px;`;
const ViewTab = styled.button`
  flex: 1; display: flex; flex-direction: column; align-items: center; justify-content: space-between; padding-bottom: 2px;
  font: 8px/12px ${SANS}; color: ${(p) => (p.$on ? "#e2e7ea" : "#727c82")};
`;
const RulerCol = styled.div`flex: 1; min-width: 0; display: flex; flex-direction: column;`;
const Overview = styled.div`height: 19px; display: flex; background: #4f5d63; position: relative;`;
const SqButton = styled.button`
  width: 20px; height: ${(p) => p.$h || 19}px; flex: none; display: grid; place-items: center; color: #22292e; background: #535c62; border: 1px solid #2e363b;
`;
const ScrollThumb = styled.div`width: 20px; height: 33px; background: #535c62; border: 1px solid #2e363b;`;
const OverviewMap = styled.svg`flex: 1; min-width: 0; height: 19px;`;
const Ruler = styled.div`
  flex: 1; display: flex; overflow: hidden; background: #1e2a31; color: #a9b1b5; font: 12px/18px ${NARROW}; padding-top: 1px; position: relative;
`;
const RulerMark = styled.span`flex: none; width: calc(100% * 4 / ${BARS}); padding-left: 1px;`;
const PlayHead = styled.i`
  position: absolute; top: 2px; border: 7px solid transparent; border-top: 10px solid #a2e032; border-bottom: 0; margin-left: -7px;
`;
const VCol = styled.div`width: 20px; flex: none; display: flex; flex-direction: column; background: #3b4247; justify-content: space-between;`;
const Lanes = styled.div`flex: 1; min-height: 0; display: flex; overflow: hidden; position: relative;`;
const Heads = styled.div`width: 110px; flex: none; background: #273137;`;
const Head = styled.div`height: ${(p) => p.$h}px; display: flex; border-bottom: 1px solid #263036;`;
const HeadBox = styled.div`
  flex: 1; display: grid; grid-template: 1fr 13px / 1fr 16px; padding: 0 0 0 1px; border-radius: 0 5px 5px 0; margin-right: 1px;
  background: linear-gradient(#525a60, #474f55); font: 14px/16px ${NARROW}; color: #cdd3d7;
`;
const HeadName = styled.span`grid-column: 1 / 3;`;
const Dots = styled.span`padding-left: 12px; color: #2e363c; font-size: 12px; line-height: 8px;`;
const Edge = styled.i`width: 10px; height: 100%; background: ${(p) => p.$c || "#2b3a44"};`;
const Canvas = styled.div`flex: 1; min-width: 0; position: relative; background: #2f414c; isolation: isolate;`;
const Grid = styled.div`position: absolute; inset: 0; display: flex; overflow: hidden;`;
const GridCell = styled.i`
  flex: none; width: calc(100% * 2 / ${BARS}); border-left: 1px solid #14222b; background: ${(p) => (p.$alt ? "#2d3e49" : "#32454f")};
`;
const Lane = styled.div`height: ${(p) => p.$h}px; position: relative; border-bottom: 2px solid #13212a;`;
const Clip = styled.div`position: absolute; top: 1px; bottom: 0; overflow: hidden;`;
const ClipHead = styled.div`
  height: 14px; display: flex; align-items: center; gap: ${(p) => (p.$tight ? 1 : 3)}px; padding-left: ${(p) => (p.$tiny ? 1 : 2)}px;
  white-space: nowrap; overflow: hidden; border-radius: 2px;
  background: ${(p) => p.$c}; box-shadow: inset ${(p) => (p.$tiny ? 0 : -1)}px 0 #26323a; font: 12px/14px ${NARROW}; color: #d8dee2;
  position: relative; z-index: 2;
  svg { flex: none; }
`;
const ClipBody = styled.svg`background: ${(p) => (p.$clear ? "none" : "rgba(34, 44, 51, 0.78)")};`;
const Playline = styled.i`
  position: absolute; top: 0; bottom: 0; width: 14px; margin-left: -13px; border-right: 2px solid #8fd838; z-index: 1;
  background: linear-gradient(90deg, transparent, rgba(70, 140, 10, 0.75)); pointer-events: none;
`;
const Watermark = styled.div`
  position: fixed; right: 26px; bottom: 23px; font: bold 22px/30px "Open Sans", "Noto Sans", sans-serif; color: #fff; z-index: 3;
`;

const pct = (b) => `${(b / BARS) * 100}%`;
const HEADER_ICON = { midi: "pat", fall: "auto", rise: "auto" };
const iconSize = (c) => (HEADER_ICON[c.kind] === "auto" ? 12 : c.kind === "full" || c.e - c.b < 2 ? 9 : 10);
const TOOLS1 = ["metronome", "wait", "count", "overdub", "loop"];
const TOOLS2 = ["typing", "arrow", "slide", "link", "knob"];
const FILE_TOOLS = ["undo", "cut", "mic", "help", "save", "render", "chat", "download"];
const WINDOW_TOOLS = ["playlist", "piano", "rack", "mixer", "browser", "files", "plug", "stomp", "hand", "cart"];
const EDIT_TOOLS = ["pencil", "brush", "slash", "mute", "slip", "slice", "select", "zoom", "speaker"];
const PICK_EDGE = { 1: "#ffffff", 4: "#8fa3b3", 10: "#ffffff" };
const scopePoints = (() => { const r = rnd(5); return Array.from({ length: 84 }, (_, i) => `${i},${(16 + Math.sin(i / 5) * 3 + (r() - 0.5) * 6).toFixed(1)}`).join(" "); })();

function Toolbar() {
  return (
    <>
      <Bar>
        <Cell $w={315}>
          <Grip />
          <MenuBar>{["文件", "编辑", "添加", "样式", "视图", "选项", "工具", "帮助"].map((m) => <MenuItem key={m}>{m}</MenuItem>)}</MenuBar>
        </Cell>
        <Cell $w={41} $justify="center"><Knob $s={26} $ring $a={100} aria-label="Main volume" /></Cell>
        <Cell $w={196}>
          <Transport>
            <Mode><ModeOff>PAT</ModeOff><ModeOn>SONG</ModeOn></Mode>
            <TButton $down aria-label="Pause"><svg width="8" height="8"><path d="M0 0h3v8H0zM5 0h3v8H5z" fill="#a8df2e" /></svg></TButton>
            <TButton aria-label="Stop"><svg width="8" height="8"><path d="M0 0h8v8H0z" fill="#e3e7ea" /></svg></TButton>
          </Transport>
          <Record aria-label="Record" />
          <Tempo defaultValue="128.000" aria-label="Tempo" />
        </Cell>
        <Cell $w={301}>
          {TOOLS1.map((t) => <Tool key={t} aria-label={t}><Icon name={t} size={22} /></Tool>)}
          <Clock>0:34:<ClockSmall>47</ClockSmall><ClockUnit>M:S:CS</ClockUnit></Clock>
        </Cell>
        <Cell $w={172} $gap={2}>
          <Scope><svg width="84" height="31"><polyline points={scopePoints} fill="none" stroke="#d6dadd" strokeWidth="1.800" /></svg></Scope>
          <Meters><Meter $w={62} /><Meter $w={58} /><MeterEye><Icon name="slash" size={10} /></MeterEye></Meters>
        </Cell>
        <Cell $w={156}>
          <Cpu>
            <CpuLeft><CpuBlock /><CpuText>29</CpuText><CpuGraph width="84" height="15"><path d="M0 13h48l3-4h33" fill="none" stroke="#cfd5d9" /></CpuGraph></CpuLeft>
            <div><CpuText>3611 MB</CpuText><CpuText $pr={19}>13</CpuText></div>
          </Cpu>
        </Cell>
        <Cell $w={268}>{FILE_TOOLS.map((t) => <Tool key={t} $teal={t === "download"} aria-label={t}><Icon name={t} /></Tool>)}</Cell>
        <WindowButtons>
          {["min", "max", "close"].map((n) => <Plain key={n} aria-label={n}><Icon name={n} size={10} /></Plain>)}
        </WindowButtons>
      </Bar>
      <Bar>
        <Cell $w={315}>
          <Grip />
          <Hint><span>[&nbsp;&nbsp;&nbsp;&nbsp;&nbsp;&nbsp;] 冬眠说唱版.zip</span><HintIcon><Icon name="knob" size={14} /></HintIcon></Hint>
        </Cell>
        <Cell $w={41} $justify="center"><Knob $s={26} aria-label="Main pitch" /></Cell>
        <Cell $w={196} $justify="center"><Slider defaultValue="12" aria-label="Song position" /></Cell>
        <Cell $w={393}>
          {TOOLS2.map((t) => <Tool key={t} aria-label={t}><Icon name={t} size={22} /></Tool>)}
          <Plain aria-label="Snap" $c="#7d868c"><Icon name="magnet" size={20} /></Plain>
          <DropWrap>
            <Dropdown $w={63} aria-label="Snap mode"><option>线</option></Dropdown>
            <DropArrow><Icon name="tri" size={11} /></DropArrow>
          </DropWrap>
          <PatternBox>
            <MiniButton aria-label="Pattern menu"><Icon name="tri" size={11} /></MiniButton>
            <PatternName defaultValue="样式 3" aria-label="Pattern" />
            <MiniButton aria-label="Add pattern"><Icon name="plus" size={7} /></MiniButton>
          </PatternBox>
        </Cell>
        <Cell $w={333}>{WINDOW_TOOLS.map((t) => <Tool key={t} $teal={t === "cart"} aria-label={t}><Icon name={t} /></Tool>)}</Cell>
        <Cell $w={172}>
          <News><div><Dim>Today</Dim>&nbsp; 有更新的 FL<br />Studio 版本可用！</div><Icon name="globe" size={19} /></News>
        </Cell>
      </Bar>
    </>
  );
}

function ChannelRack() {
  return (
    <Rack>
      <RackHead>
        <Plain aria-label="Rack menu"><Icon name="tri" size={12} /></Plain>
        <Plain aria-label="Undo"><Icon name="back" size={12} /></Plain>
        <DropWrap $ml={54}>
          <Dropdown $w={64} $bg="#3e464c" $line="#3a4147" $c="#a5acb0" aria-label="Channel filter"><option>全部</option></Dropdown>
          <DropArrow><Icon name="tri" size={11} /></DropArrow>
        </DropWrap>
        <RackTitle><Icon name="play" size={15} />通道机架</RackTitle>
        <Faint $w={20} $r={10} /><Faint $w={34} $r={4} />
        <Plain aria-label="Graph editor"><Icon name="bars" size={14} /></Plain>
        <Plain aria-label="Step mode" $c="#c09a4c"><Icon name="racks" size={15} /></Plain>
        <Plain aria-label="Close"><Icon name="close" size={11} /></Plain>
      </RackHead>
      <RackBody>
        <Channels>{CHANNELS.map((c, i) => <ChannelRow key={i} data={c} index={i} />)}</Channels>
        <ScrollColumn>
          <div><Icon name="up" size={8} /><Thumb /></div>
          <Icon name="down" size={8} />
        </ScrollColumn>
      </RackBody>
      <RackFoot>
        <Plain aria-label="Add channel" $c="#d4dade" $ml={138}><Icon name="plus" size={8} /></Plain>
        <HScroll><Icon name="left" size={8} /><HThumb /><Icon name="right" size={8} /></HScroll>
      </RackFoot>
    </Rack>
  );
}

function PatternPicker() {
  return (
    <Picker>
      <PickTabs>
        <Plain $c="#dfe4e7" aria-label="Patterns"><Icon name="keys" size={16} /></Plain>
        <Plain aria-label="Audio clips"><Icon name="wave" size={17} /></Plain>
        <Plain aria-label="Automation clips"><Icon name="auto" size={16} /></Plain>
      </PickTabs>
      <PickList>
        <PickItems>
          {Array.from({ length: 10 }, (_, i) => i + 1).map((n) => (
            <PickItem key={n} $on={n === 3}>
              <PickButton $edge={PICK_EDGE[n]}><Icon name="pat" size={10} />样式 {n}</PickButton>
              <PickNotes width="78" height="22" viewBox="0 0 118 40" preserveAspectRatio="none">
                {notes(n, 16).map(([x, y, w, h], k) => <rect key={k} x={x} y={y} width={w} height={h} fill="#b9c3c8" />)}
              </PickNotes>
              {n === 3 && <Marker />}
            </PickItem>
          ))}
        </PickItems>
        <PickScroll><PickScrollBtn aria-label="Scroll"><Nub /></PickScrollBtn></PickScroll>
      </PickList>
      <PickFoot><Plain aria-label="Add pattern"><Icon name="plus" size={8} /></Plain></PickFoot>
    </Picker>
  );
}

function Arrangement() {
  const heightOf = (i) => (i === 1 ? 54 : 56);
  return (
    <Arrange>
      <TopRow>
        <Corner aria-label="Add track"><Icon name="plus" size={8} /></Corner>
        <ViewTabs>
          <ViewTab><Icon name="wave" size={17} />音符</ViewTab>
          <ViewTab><Icon name="auto" size={17} />通道</ViewTab>
          <ViewTab $on><Icon name="keys" size={16} />样式</ViewTab>
        </ViewTabs>
        <RulerCol>
          <Overview>
            <SqButton aria-label="Scroll left"><Icon name="left" size={10} /></SqButton>
            <OverviewMap viewBox="0 0 146 19" preserveAspectRatio="none">
              {TRACKS.flatMap(([, clips], t) => clips.map((c, i) => (
                <rect key={t + "-" + i} x={c.b} y={1 + t} width={c.e - c.b} height="1" fill={TONE[c.tone][1]} opacity=".3" />
              )))}
              <rect x="18.3" y="0" width=".3" height="19" fill="#c4ff4a" />
            </OverviewMap>
            <SqButton aria-label="Scroll right"><Icon name="right" size={10} /></SqButton>
          </Overview>
          <Ruler>
            {Array.from({ length: 38 }, (_, i) => <RulerMark key={i}>{1 + i * 4}</RulerMark>)}
            <PlayHead style={{ left: pct(18.4) }} />
          </Ruler>
        </RulerCol>
        <VCol>
          <SqButton aria-label="View options"><Nub /></SqButton>
          <SqButton $h={20} aria-label="Scroll up"><Icon name="up" size={10} /></SqButton>
        </VCol>
      </TopRow>
      <Lanes>
        <Heads>
          {TRACKS.map(([edge], i) => (
            <Head key={i} $h={heightOf(i)}>
              <HeadBox>
                <HeadName>Track {i + 1}</HeadName>
                <Dots>{i < 15 ? "..." : ""}</Dots>
                <Led $track aria-label={`Track ${i + 1} on`} />
              </HeadBox>
              <Edge $c={edge} />
            </Head>
          ))}
        </Heads>
        <Canvas>
          <Grid>{Array.from({ length: 76 }, (_, i) => <GridCell key={i} $alt={Math.floor(i / 2) % 2 === 0} />)}</Grid>
          {TRACKS.map(([, clips], i) => (
            <Lane key={i} $h={heightOf(i)}>
              {clips.map((c, k) => (
                <Clip key={k} style={{ left: pct(c.b), width: pct(c.e - c.b) }}>
                  <ClipHead $c={TONE[c.tone][0]} $tiny={c.e - c.b <= 2} $tight={c.kind === "full"}>
                    {(c.label !== undefined || HEADER_ICON[c.kind]) && <Icon name={HEADER_ICON[c.kind] || "clip"} size={iconSize(c)} />}
                    {c.label}
                  </ClipHead>
                  <ClipArt clip={c} seed={i * 31 + k + 1} />
                </Clip>
              ))}
            </Lane>
          ))}
          <Playline style={{ left: pct(18.4) }} />
        </Canvas>
        <VCol>
          <ScrollThumb />
          <SqButton $h={20} aria-label="Scroll down"><Icon name="down" size={10} /></SqButton>
        </VCol>
      </Lanes>
    </Arrange>
  );
}

export default function App() {
  return (
    <Shell>
      <GlobalStyle />
      <Toolbar />
      <Main>
        <ChannelRack />
        <Playlist>
          <PlHead>
            <Plain aria-label="Playlist menu"><Icon name="tri" size={13} /></Plain>
            <Plain aria-label="Snap to grid" $c="#5ee6a8" $ml={6}><Icon name="magnet" size={15} /></Plain>
            <HeadTools>
              {EDIT_TOOLS.map((t) => <Plain key={t} aria-label={t} $c={t === "brush" ? "#6cb8ee" : undefined}><Icon name={t} size={15} /></Plain>)}
            </HeadTools>
            <HeadTitle>
              <Plain $c="#a8df2e" aria-label="Preview"><Icon name="play" size={15} /></Plain>
              播放列表 - Arrangement <Icon name="tri" size={9} /> 样式 3 <Icon name="tri" size={9} />
            </HeadTitle>
            <WindowButtons $c="#c9cfd3" $pr={0}>
              {["min", "max", "close"].map((n) => <Plain key={n} aria-label={n}><Icon name={n} size={9} /></Plain>)}
            </WindowButtons>
          </PlHead>
          <PlMain>
            <PatternPicker />
            <Arrangement />
          </PlMain>
        </Playlist>
      </Main>
      <Watermark>www.flpdown.com</Watermark>
    </Shell>
  );
}
